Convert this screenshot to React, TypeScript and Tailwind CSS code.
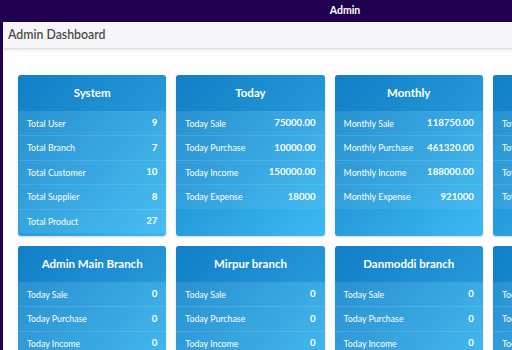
import React from "react";

type Row = [string, string];
type Card = { title: string; rows: Row[] };

const cards: Card[] = [
  {
    title: "System",
    rows: [
      ["Total User", "9"],
      ["Total Branch", "7"],
      ["Total Customer", "10"],
      ["Total Supplier", "8"],
      ["Total Product", "27"],
    ],
  },
  {
    title: "Today",
    rows: [
      ["Today Sale", "75000.00"],
      ["Today Purchase", "10000.00"],
      ["Today Income", "150000.00"],
      ["Today Expense", "18000"],
    ],
  },
  {
    title: "Monthly",
    rows: [
      ["Monthly Sale", "118750.00"],
      ["Monthly Purchase", "461320.00"],
      ["Monthly Income", "188000.00"],
      ["Monthly Expense", "921000"],
    ],
  },
  {
    title: "Yearly",
    rows: [
      ["Total Sale", "0"],
      ["Total Purchase", "0"],
      ["Total Income", "0"],
      ["Total Expense", "0"],
    ],
  },
  {
    title: "Admin Main Branch",
    rows: [
      ["Today Sale", "0"],
      ["Today Purchase", "0"],
      ["Today Income", "0"],
      ["Today Expense", "0"],
    ],
  },
  {
    title: "Mirpur branch",
    rows: [
      ["Today Sale", "0"],
      ["Today Purchase", "0"],
      ["Today Income", "0"],
      ["Today Expense", "0"],
    ],
  },
  {
    title: "Danmoddi branch",
    rows: [
      ["Today Sale", "0"],
      ["Today Purchase", "0"],
      ["Today Income", "0"],
      ["Today Expense", "0"],
    ],
  },
  {
    title: "Uttara branch",
    rows: [
      ["Today Sale", "0"],
      ["Today Purchase", "0"],
      ["Today Income", "0"],
      ["Today Expense", "0"],
    ],
  },
];

function StatCard({ card }: { card: Card }) {
  return (
    <div className="h-[161px] rounded-[3px] bg-gradient-to-br from-[#1383c9] to-[#3bbaf2] overflow-hidden text-white flex flex-col shadow-[0_1px_2px_rgba(0,0,0,0.15)]">
      <div className="h-[36px] shrink-0 flex items-center justify-center bg-[#0a6fb8]/20 text-[11.5px] font-bold whitespace-nowrap">
        {card.title}
      </div>
      <div className="flex flex-col">
        {card.rows.map(([label, value], i) => (
          <div
            key={i}
            className="h-[24.4px] flex items-center justify-between gap-1 px-[9px] bg-white/[0.07] border-t border-white/[0.12] first:border-t-0 whitespace-nowrap"
          >
            <span className="text-[8.8px]">{label}</span>
            <span className="text-[9.6px] font-bold">{value}</span>
          </div>
        ))}
      </div>
    </div>
  );
}

export default function App() {
  return (
    <div
      className="w-[512px] h-[350px] overflow-hidden flex flex-col bg-[#1f0150]"
      style={{ fontFamily: "'Lato', 'Open Sans', sans-serif" }}
    >
      <div className="h-[22px] shrink-0 flex items-center justify-center pl-[178px] text-white text-[10.5px] font-bold">
        Admin
      </div>
      <div className="flex-1 flex min-h-0">
        <div className="w-[3px] shrink-0" />
        <div className="flex-1 flex flex-col bg-[#fdfdfe] min-w-0">
          <div className="h-[27px] shrink-0 flex items-center px-[5px] bg-[#f6f6f8] border-b border-[#dedee3] shadow-[0_1px_3px_rgba(0,0,0,0.1)] text-[12.3px] font-semibold text-[#4a4a4a]">
            Admin Dashboard
          </div>
          <div className="flex-1 pt-[26px] pl-[15px] overflow-hidden">
            <div className="grid grid-cols-[repeat(4,148.3px)] gap-x-[10px] gap-y-[10px]">
              {cards.map((c, i) => (
                <StatCard key={i} card={c} />
              ))}
            </div>
          </div>
        </div>
      </div>
    </div>
  );
}
